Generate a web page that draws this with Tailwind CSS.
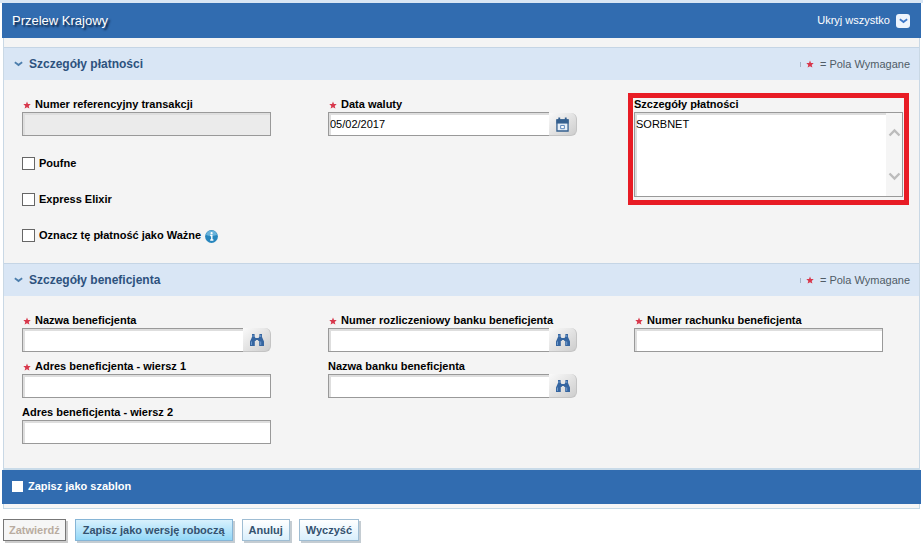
<!DOCTYPE html>
<html lang="pl">
<head>
<meta charset="utf-8">
<meta name="viewport" content="width=device-width, initial-scale=1">
<title>Przelew Krajowy</title>
<script src="https://cdn.jsdelivr.net/npm/@tailwindcss/browser@4"></script>
</head>
<body class="bg-white font-['Liberation_Sans',Arial,sans-serif] text-[11px] leading-[15px] text-black">
<svg class="hidden" aria-hidden="true">
  <symbol id="star" viewBox="0 0 8 8"><path d="M4 .5L5 2.900 7.700 3.100 5.700 4.900 6.400 7.500 4 6.200 1.600 7.500 2.300 4.900.3 3.100 3 2.900z" fill="#d8384c"/></symbol>
  <symbol id="chev" viewBox="0 0 9 6"><path d="M.8 1.200Q2.500 2.200 4.500 4 6.500 2.200 8.200 1.200" stroke="currentColor" stroke-width="1.800" fill="none"/></symbol>
  <symbol id="binoculars" viewBox="0 0 16 14"><path d="M3 1h2.600v2.500L6.500 5h3l.9-1.500V1H13v3l2 4.500V13h-4.800V8H9.500L8.800 7H7.200l-.7 1h-.7v5H1V8.500L3 4z" fill="#3565a0"/><path d="M2.500 8.500V12M11.700 8.500V12M4 2v2M11.700 2v2" stroke="#6f9bcd"/></symbol>
  <symbol id="calendar" viewBox="0 0 14 16"><path d="M1 3h12v12H1z" fill="#e6eff8" stroke="#35608f" stroke-width="1.400"/><path d="M.5 2.500h13V7H.5z" fill="#35608f"/><path d="M3.500.500v4M10.500.500v4" stroke="#35608f" stroke-width="2"/><path d="M5 9h4v3.500H5z" fill="#fff" stroke="#4f7db5"/></symbol>
</svg>

<div class="h-[3px] bg-[#d9e6f4]"></div>
<main class="mx-[2px]">
  <header class="flex h-[35px] items-center justify-between bg-[#316cb0] pr-[11px] pl-[10px] text-white">
    <h1 class="text-[13px] [text-shadow:2px_2px_2px_#0b1f3a]">Przelew Krajowy</h1>
    <button type="button" class="flex items-center gap-[6px]">
      <span>Ukryj wszystko</span>
      <span class="flex size-[14px] items-center justify-center rounded-[3px] bg-[#edf4fd] text-[#3b76c8]"><svg class="h-[6px] w-[9px]"><use href="#chev"/></svg></span>
    </button>
  </header>

  <form>
    <div class="mx-px border-x border-[#c9d8e5] bg-[#f4f4f4] pt-[9px]">
      <section>
        <div class="flex h-[33px] items-center justify-between border-t border-[#c5d5e5] bg-[#d9e6f5] pr-[9px] pl-[10px]">
          <h2 class="flex items-center gap-[6px] text-[12px] font-bold text-[#2d527e]"><svg class="h-[6px] w-[9px] text-[#4b7dac]"><use href="#chev"/></svg>Szczegóły płatności</h2>
          <p class="flex items-center text-[#505c66]"><span class="mr-[5px] h-[5px] w-px bg-[#a3b4c6]"></span><svg class="mr-[6px] size-[8px]"><use href="#star"/></svg>= Pola Wymagane</p>
        </div>
        <div class="grid grid-cols-[306fr_306fr_285fr] items-start pt-[17px] pb-[10px] pl-[18px]">
          <div>
            <label for="ref" class="flex items-center gap-[4px] pl-px font-bold"><svg class="size-[8px]"><use href="#star"/></svg>Numer referencyjny transakcji</label>
            <input id="ref" disabled class="block h-[24px] w-[249px] border border-[#999] bg-[#ebebeb] px-[2px] shadow-[inset_2px_2px_0_#dedede]">
            <div class="mt-[9px]">
              <label class="flex h-[36px] items-center gap-[4px] font-bold"><input type="checkbox" class="size-[13px] appearance-none border border-[#666] bg-white checked:bg-[#316cb0]">Poufne</label>
              <label class="flex h-[36px] items-center gap-[4px] font-bold"><input type="checkbox" class="size-[13px] appearance-none border border-[#666] bg-white checked:bg-[#316cb0]">Express Elixir</label>
              <label class="flex h-[36px] items-center gap-[4px] font-bold"><input type="checkbox" class="size-[13px] appearance-none border border-[#666] bg-white checked:bg-[#316cb0]">Oznacz tę płatność jako Ważne
                <svg class="mt-[2px] size-[13px]" viewBox="0 0 13 13" aria-hidden="true"><circle cx="6.500" cy="6.500" r="6.400" fill="#2786bd"/><path d="M1 5a5.600 5.600 0 0 1 11 0Q6 7 1 5z" fill="#68b3db"/><path d="M5.200 5.500h1.600v4M5.200 10h3.200" stroke="#fff" stroke-width="1.400" fill="none"/><circle cx="6.600" cy="3.200" r="1.100" fill="#fff"/></svg></label>
            </div>
          </div>
          <div>
            <label for="date" class="flex items-center gap-[4px] pl-px font-bold"><svg class="size-[8px]"><use href="#star"/></svg>Data waluty</label>
            <div class="flex w-[249px]">
              <input id="date" value="05/02/2017" class="h-[24px] min-w-0 flex-1 border border-r-0 border-[#999] bg-white px-px shadow-[inset_2px_2px_0_#dedede]">
              <button type="button" aria-label="Kalendarz" class="mt-px flex h-[23px] w-[28px] items-center justify-center rounded-r-[6px] border-r border-b border-[#c4c4c4] bg-linear-to-br from-[#fafafa] to-[#cdcdcd]"><svg class="h-[15px] w-[13px]"><use href="#calendar"/></svg></button>
            </div>
          </div>
          <div class="-mt-[4px] mr-[10px] -ml-[6px] border-[5px] border-[#e81c25] px-px pb-[3px]">
            <label for="details" class="block h-[14px] leading-[13px] font-bold">Szczegóły płatności</label>
            <div class="flex h-[85px] border border-[#999] bg-white shadow-[inset_2px_2px_0_#dedede]">
              <textarea id="details" class="block min-w-0 flex-1 resize-none overflow-hidden bg-transparent px-px pt-[4px]">SORBNET</textarea>
              <div class="flex w-[16px] flex-col items-center justify-between bg-[#f5f5f5] pt-[15px] pb-[15px] text-[#bcbcbc]">
                <button type="button" aria-label="W górę"><svg class="block h-[9px] w-[13px]" viewBox="0 0 13 9"><path d="M1.500 7.500l5-5 5 5" stroke="currentColor" stroke-width="2.400" fill="none"/></svg></button>
                <button type="button" aria-label="W dół"><svg class="block h-[9px] w-[13px]" viewBox="0 0 13 9"><path d="M1.500 1.500l5 5 5-5" stroke="currentColor" stroke-width="2.400" fill="none"/></svg></button>
              </div>
            </div>
          </div>
        </div>
      </section>

      <section>
        <div class="flex h-[33px] items-center justify-between border-t border-[#c5d5e5] bg-[#d9e6f5] pr-[9px] pl-[10px]">
          <h2 class="flex items-center gap-[6px] text-[12px] font-bold text-[#2d527e]"><svg class="h-[6px] w-[9px] text-[#4b7dac]"><use href="#chev"/></svg>Szczegóły beneficjenta</h2>
          <p class="flex items-center text-[#505c66]"><span class="mr-[5px] h-[5px] w-px bg-[#a3b4c6]"></span><svg class="mr-[6px] size-[8px]"><use href="#star"/></svg>= Pola Wymagane</p>
        </div>
        <div class="grid grid-cols-[306fr_306fr_285fr] items-start pt-[17px] pb-[24px] pl-[18px]">
          <div class="flex flex-col gap-[7px]">
            <div>
              <label for="name" class="flex items-center gap-[4px] pl-px font-bold"><svg class="size-[8px]"><use href="#star"/></svg>Nazwa beneficjenta</label>
              <div class="flex w-[249px]">
                <input id="name" class="h-[24px] min-w-0 flex-1 border border-r-0 border-[#999] bg-white px-px shadow-[inset_2px_2px_0_#dedede]">
                <button type="button" aria-label="Szukaj beneficjenta" class="flex h-[24px] w-[28px] items-center justify-center rounded-r-[6px] border-r border-b border-[#c4c4c4] bg-linear-to-br from-[#fafafa] to-[#cdcdcd]"><svg class="h-[14px] w-[16px]"><use href="#binoculars"/></svg></button>
              </div>
            </div>
            <div>
              <label for="addr1" class="flex items-center gap-[4px] pl-px font-bold"><svg class="size-[8px]"><use href="#star"/></svg>Adres beneficjenta - wiersz 1</label>
              <input id="addr1" class="block h-[24px] w-[249px] border border-[#999] bg-white px-[2px] shadow-[inset_2px_2px_0_#dedede]">
            </div>
            <div>
              <label for="addr2" class="block font-bold">Adres beneficjenta - wiersz 2</label>
              <input id="addr2" class="block h-[24px] w-[249px] border border-[#999] bg-white px-[2px] shadow-[inset_2px_2px_0_#dedede]">
            </div>
          </div>
          <div class="flex flex-col gap-[7px]">
            <div>
              <label for="bankno" class="flex items-center gap-[4px] pl-px font-bold"><svg class="size-[8px]"><use href="#star"/></svg>Numer rozliczeniowy banku beneficjenta</label>
              <div class="flex w-[249px]">
                <input id="bankno" class="h-[24px] min-w-0 flex-1 border border-r-0 border-[#999] bg-white px-px shadow-[inset_2px_2px_0_#dedede]">
                <button type="button" aria-label="Szukaj numeru banku" class="flex h-[24px] w-[28px] items-center justify-center rounded-r-[6px] border-r border-b border-[#c4c4c4] bg-linear-to-br from-[#fafafa] to-[#cdcdcd]"><svg class="h-[14px] w-[16px]"><use href="#binoculars"/></svg></button>
              </div>
            </div>
            <div>
              <label for="bank" class="block font-bold">Nazwa banku beneficjenta</label>
              <div class="flex w-[249px]">
                <input id="bank" class="h-[24px] min-w-0 flex-1 border border-r-0 border-[#999] bg-white px-px shadow-[inset_2px_2px_0_#dedede]">
                <button type="button" aria-label="Szukaj banku" class="flex h-[24px] w-[28px] items-center justify-center rounded-r-[6px] border-r border-b border-[#c4c4c4] bg-linear-to-br from-[#fafafa] to-[#cdcdcd]"><svg class="h-[14px] w-[16px]"><use href="#binoculars"/></svg></button>
              </div>
            </div>
          </div>
          <div>
            <label for="account" class="flex items-center gap-[4px] pl-px font-bold"><svg class="size-[8px]"><use href="#star"/></svg>Numer rachunku beneficjenta</label>
            <input id="account" class="block h-[24px] w-[249px] border border-[#999] bg-white px-[2px] shadow-[inset_2px_2px_0_#dedede]">
          </div>
        </div>
      </section>
    </div>

    <div class="mx-px h-[2px] bg-[#c9dbe9]"></div>
    <div class="flex h-[34px] items-center bg-[#316cb0] pb-[2px] pl-[10px] text-white">
      <label class="flex items-center gap-[5px] font-bold"><input type="checkbox" class="size-[11px] appearance-none bg-white checked:bg-[#9cc8ec]">Zapisz jako szablon</label>
    </div>
    <div class="mx-px h-[5px] border-x border-b border-[#c5d9e6] bg-[#f6f6f6]"></div>

    <div class="mt-[10px] flex gap-[9px] pb-[5px] pl-px font-bold text-[#34526f]">
      <button type="button" disabled class="h-[22px] border border-[#777] bg-[#f6f6f6] px-[5px] text-[#b9aca0] shadow-[2px_2px_0_#ccc]">Zatwierdź</button>
      <button type="button" class="h-[22px] border border-[#86b5d6] bg-linear-to-b from-[#d8f1fd] to-[#92d8f8] px-[7px] shadow-[2px_2px_0_#c4ccd2]">Zapisz jako wersję roboczą</button>
      <button type="button" class="h-[22px] border border-[#9fbdd3] bg-linear-to-b from-white to-[#d9effc] px-[6px] shadow-[2px_2px_0_#c4ccd2]">Anuluj</button>
      <button type="button" class="h-[22px] border border-[#9fbdd3] bg-linear-to-b from-white to-[#d9effc] px-[6px] shadow-[2px_2px_0_#c4ccd2]">Wyczyść</button>
    </div>
  </form>
</main>
</body>
</html>
